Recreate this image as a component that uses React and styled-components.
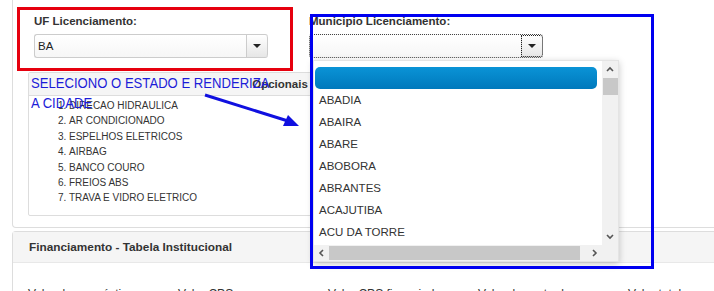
import React from 'react';
import styled, { createGlobalStyle } from 'styled-components';

const GlobalStyle = createGlobalStyle`
  html, body {
    margin: 0;
    padding: 0;
    background: #fff;
    overflow: hidden;
  }
  body {
    font-family: "Liberation Sans", Arial, sans-serif;
    font-size: 12px;
    color: #333;
  }
`;

const opcionais = [
  'DIRECAO HIDRAULICA',
  'AR CONDICIONADO',
  'ESPELHOS ELETRICOS',
  'AIRBAG',
  'BANCO COURO',
  'FREIOS ABS',
  'TRAVA E VIDRO ELETRICO',
];

const cidades = ['ABADIA', 'ABAIRA', 'ABARE', 'ABOBORA', 'ABRANTES', 'ACAJUTIBA', 'ACU DA TORRE', 'ADUSTINA'];

const colunas = ['Valor do empréstimo', 'Valor CPS', 'Valor CPS financiado', 'Valor do custo do seguro', 'Valor total'];

const Page = styled.div`
  position: relative;
  width: 714px;
  height: 291px;
  overflow: hidden;
`;

const Panel = styled.div`
  margin-left: 12px;
  width: 760px;
  border: 1px solid #ddd;
  border-top: none;
  border-radius: 0 0 4px 4px;
  padding: 14px 15px 11px 15px;
  box-sizing: border-box;
`;

const FormRow = styled.div`
  display: flex;
`;

const FormGroup = styled.div`
  width: 275px;
  padding-left: 6px;
  box-sizing: border-box;
`;

const Label = styled.div`
  font-weight: bold;
  font-size: 11.5px;
  line-height: 14px;
  margin-bottom: 6px;
  white-space: nowrap;
`;

const SelectWrap = styled.div`
  position: relative;
  display: flex;
  width: 234px;
  height: 24px;
  box-sizing: border-box;
  border: 1px ${p => (p.focused ? 'dotted #444' : 'solid #ccc')};
  border-right: none;
  border-radius: 3px;
  background: linear-gradient(#fff, #f6f6f6);
`;

const SelectValue = styled.div`
  flex: 1;
  padding-left: 3px;
  line-height: 22px;
  font-size: 11.5px;
  color: #222;
`;

const SelectButton = styled.div`
  width: 22px;
  display: flex;
  align-items: center;
  justify-content: center;
  border-left: 1px solid #ccc;
  border-right: 1px solid #ccc;
  border-radius: 0 3px 3px 0;
  background: linear-gradient(#fff, #e6e6e6);
  box-sizing: border-box;
  outline: ${p => (p.focused ? '1px dotted #222' : 'none')};
  outline-offset: -1px;
  &::after {
    content: '';
    border-left: 4px solid transparent;
    border-right: 4px solid transparent;
    border-top: 4px solid #222;
  }
`;

const Dropdown = styled.div`
  position: absolute;
  top: 25px;
  left: 3px;
  width: 306px;
  height: 202px;
  background: #fff;
  box-shadow: 0 2px 7px rgba(0, 0, 0, 0.22);
  border: 1px solid #e4e4e4;
  box-sizing: border-box;
  display: grid;
  grid-template-columns: 1fr 16px;
  grid-template-rows: 1fr 16px;
  z-index: 5;
`;

const ListArea = styled.div`
  overflow: hidden;
  padding-top: 6px;
`;

const Item = styled.div`
  height: 22px;
  line-height: 22px;
  padding-left: 5px;
  font-size: 11.5px;
  color: #333;
  margin-right: 6px;
  white-space: nowrap;
  ${p =>
    p.active &&
    `
    background: linear-gradient(#0a93d6, #0079bc);
    border-radius: 5px;
    margin-left: 1px;
    margin-right: 5px;
  `}
`;

const VScroll = styled.div`
  background: #f1f1f1;
  display: flex;
  flex-direction: column;
  align-items: center;
`;

const HScroll = styled.div`
  background: #f1f1f1;
  display: flex;
  align-items: center;
`;

const Corner = styled.div`
  background: #f1f1f1;
`;

const ArrowBox = styled.div`
  width: 15px;
  height: ${p => (p.horizontal ? '16px' : '17px')};
  display: flex;
  align-items: center;
  justify-content: center;
`;

const VThumb = styled.div`
  width: 15px;
  height: 17px;
  background: #c8c8c8;
`;

const HThumb = styled.div`
  width: 251px;
  height: 14px;
  background: #c8c8c8;
`;

const Spacer = styled.div`
  flex: 1;
`;

const OpcBox = styled.div`
  margin-top: 14px;
  width: 502px;
  border: 1px solid #ddd;
  border-radius: 2px;
`;

const OpcHeader = styled.div`
  height: 22px;
  line-height: 22px;
  text-align: center;
  font-weight: bold;
  font-size: 11.5px;
  background: #f5f5f5;
  border-bottom: 1px solid #ddd;
`;

const OpcList = styled.ol`
  margin: 0;
  padding: 2px 0 9px 40px;
  font-size: 10px;
  line-height: 15.4px;
`;

const Panel2 = styled.div`
  margin-top: 3px;
  margin-left: 12px;
  width: 760px;
  border: 1px solid #ddd;
  border-bottom: none;
  border-radius: 4px 0 0 0;
`;

const Panel2Heading = styled.div`
  height: 30px;
  line-height: 31px;
  padding-left: 16px;
  background: #f5f5f5;
  border-bottom: 1px solid #e8e8e8;
  font-weight: bold;
  font-size: 11.8px;
`;

const Panel2Body = styled.div`
  display: grid;
  grid-template-columns: repeat(5, 150px);
  padding: 24px 15px 0 15px;
  font-size: 12px;
  line-height: 14px;
  white-space: nowrap;
`;

const Annotation = styled.div`
  position: absolute;
  box-sizing: border-box;
  border: 3px solid ${p => p.color};
  left: ${p => p.x}px;
  top: ${p => p.y}px;
  width: ${p => p.w}px;
  height: ${p => p.h}px;
  z-index: ${p => p.z};
  pointer-events: none;
`;

const Note = styled.div`
  position: absolute;
  left: 31px;
  top: 73px;
  font-size: 15.5px;
  line-height: 20px;
  color: #1c1cd8;
  z-index: 6;
  white-space: nowrap;
  transform: scaleX(0.845);
  transform-origin: left top;
`;

const ArrowSvg = styled.svg`
  position: absolute;
  left: 200px;
  top: 88px;
  z-index: 6;
`;

const Chevron = ({ dir }) => {
  const pts = {
    up: '1,5 4,2 7,5',
    down: '1,2 4,5 7,2',
    left: '5,1 2,4 5,7',
    right: '2,1 5,4 2,7',
  }[dir];
  return (
    <svg width="8" height="8" viewBox="0 0 8 8">
      <polyline points={pts} fill="none" stroke="#555" strokeWidth="1.6" />
    </svg>
  );
};

export default function App() {
  return (
    <Page>
      <GlobalStyle />
      <Panel>
        <FormRow>
          <FormGroup>
            <Label>UF Licenciamento:</Label>
            <SelectWrap>
              <SelectValue>BA</SelectValue>
              <SelectButton />
            </SelectWrap>
          </FormGroup>
          <FormGroup>
            <Label>Municipio Licenciamento:</Label>
            <SelectWrap focused>
              <SelectValue />
              <SelectButton focused />
              <Dropdown>
                <ListArea>
                  <Item active>&nbsp;</Item>
                  {cidades.map(c => (
                    <Item key={c}>{c}</Item>
                  ))}
                </ListArea>
                <VScroll>
                  <ArrowBox><Chevron dir="up" /></ArrowBox>
                  <VThumb />
                  <Spacer />
                  <ArrowBox><Chevron dir="down" /></ArrowBox>
                </VScroll>
                <HScroll>
                  <ArrowBox horizontal><Chevron dir="left" /></ArrowBox>
                  <HThumb />
                  <Spacer />
                  <ArrowBox horizontal><Chevron dir="right" /></ArrowBox>
                </HScroll>
                <Corner />
              </Dropdown>
            </SelectWrap>
          </FormGroup>
        </FormRow>
        <OpcBox>
          <OpcHeader>Opcionais</OpcHeader>
          <OpcList>
            {opcionais.map(o => (
              <li key={o}>{o}</li>
            ))}
          </OpcList>
        </OpcBox>
      </Panel>
      <Panel2>
        <Panel2Heading>Financiamento - Tabela Institucional</Panel2Heading>
        <Panel2Body>
          {colunas.map(c => (
            <div key={c}>{c}</div>
          ))}
        </Panel2Body>
      </Panel2>

      <Annotation color="#e6000e" x={17} y={7} w={276} h={64} z={4} />
      <Annotation color="#0000f0" x={310} y={14} w={344} h={255} z={7} />
      <Note>
        SELECIONO O ESTADO E RENDERIZA
        <br />
        A CIDADE
      </Note>
      <ArrowSvg width="110" height="45" viewBox="0 0 110 45">
        <line x1="5" y1="7" x2="88" y2="33" stroke="#1010e0" strokeWidth="3" />
        <polygon points="99,38 83,38 88,27" fill="#1010e0" />
      </ArrowSvg>
    </Page>
  );
}
